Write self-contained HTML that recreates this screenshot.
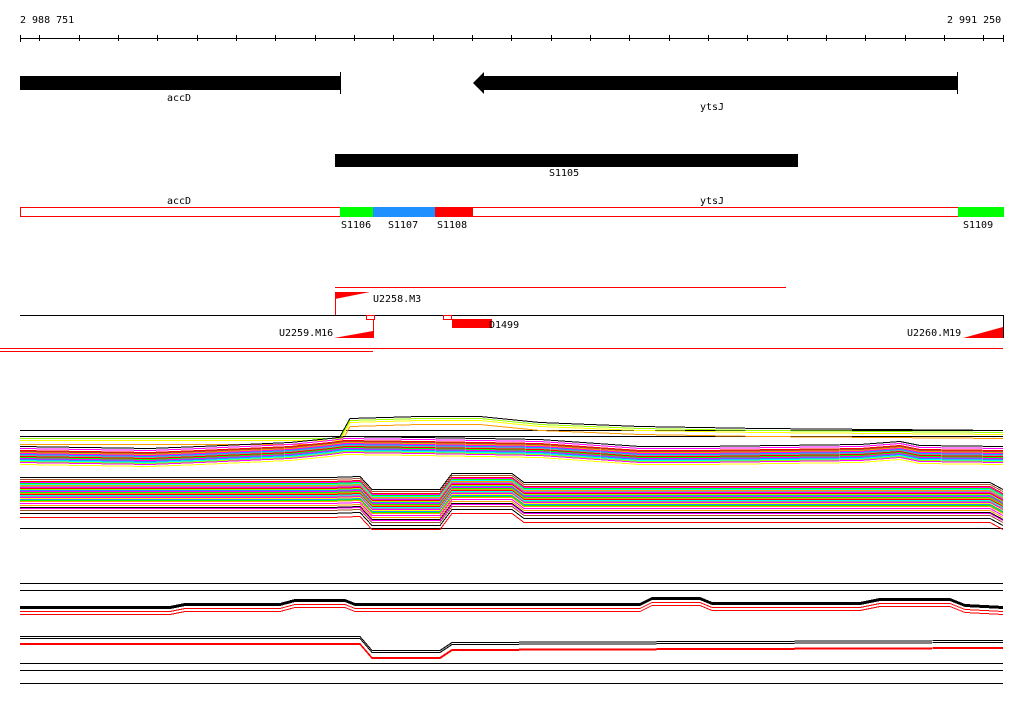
<!DOCTYPE html>
<html><head><style>
body{margin:0;background:#fff;}
svg{display:block;font-family:"DejaVu Sans Mono","Liberation Mono",monospace;font-size:10px;}
line,rect,polyline,polygon{shape-rendering:crispEdges;}
</style></head><body>
<svg width="1024" height="714" xmlns="http://www.w3.org/2000/svg">
<defs>
<polyline id="b1" fill="none" stroke-width="1" points="20,0 150,2 200,0 290,-4 330,-8 345,-10 420,-9 540,-7 640,0 700,0 860,-2 900,-5 920,-1 1003,0"/>
<polyline id="b1t" fill="none" stroke-width="1" points="20,0 340,0 350,-18 420,-20 480,-20 540,-14 640,-10 760,-8 1003,-6"/>
<polyline id="b2" fill="none" stroke-width="1" points="20,0 330,0 360,-1 372,12 440,12 452,-4 512,-4 524,5 700,5 990,5 1003,12"/>
<polyline id="c1" fill="none" stroke-width="1" points="20,0 170,0 185,-3 280,-3 295,-7 345,-7 355,-3 640,-3 652,-9 700,-9 712,-4 860,-4 880,-8 950,-8 965,-2 1003,0"/>
<polyline id="c2" fill="none" stroke-width="1" points="20,0 360,0 372,14 440,14 452,6 1003,4"/>
</defs>
<text x="20" y="23">2 988 751</text>
<text x="947" y="23">2 991 250</text>
<line x1="20" y1="38.5" x2="1003" y2="38.5" stroke="#000"/>
<g stroke="#000">
<line x1="20.5" y1="35" x2="20.5" y2="42"/><line x1="1003.5" y1="35" x2="1003.5" y2="42"/>
<line x1="39.5" y1="35" x2="39.5" y2="41"/><line x1="79.5" y1="35" x2="79.5" y2="41"/><line x1="118.5" y1="35" x2="118.5" y2="41"/><line x1="157.5" y1="35" x2="157.5" y2="41"/><line x1="197.5" y1="35" x2="197.5" y2="41"/><line x1="236.5" y1="35" x2="236.5" y2="41"/><line x1="275.5" y1="35" x2="275.5" y2="41"/><line x1="315.5" y1="35" x2="315.5" y2="41"/><line x1="354.5" y1="35" x2="354.5" y2="41"/><line x1="393.5" y1="35" x2="393.5" y2="41"/><line x1="433.5" y1="35" x2="433.5" y2="41"/><line x1="472.5" y1="35" x2="472.5" y2="41"/><line x1="511.5" y1="35" x2="511.5" y2="41"/><line x1="551.5" y1="35" x2="551.5" y2="41"/><line x1="590.5" y1="35" x2="590.5" y2="41"/><line x1="629.5" y1="35" x2="629.5" y2="41"/><line x1="669.5" y1="35" x2="669.5" y2="41"/><line x1="708.5" y1="35" x2="708.5" y2="41"/><line x1="747.5" y1="35" x2="747.5" y2="41"/><line x1="787.5" y1="35" x2="787.5" y2="41"/><line x1="826.5" y1="35" x2="826.5" y2="41"/><line x1="865.5" y1="35" x2="865.5" y2="41"/><line x1="905.5" y1="35" x2="905.5" y2="41"/><line x1="944.5" y1="35" x2="944.5" y2="41"/><line x1="983.5" y1="35" x2="983.5" y2="41"/>
</g>
<rect x="20" y="76" width="320" height="14" fill="#000"/>
<line x1="340.5" y1="72" x2="340.5" y2="94" stroke="#000"/>
<text x="167" y="101">accD</text>
<polygon points="473,83 484,72 484,76 958,76 958,90 484,90 484,94" fill="#000" style="shape-rendering:auto"/>
<line x1="957.5" y1="72" x2="957.5" y2="94" stroke="#000"/>
<text x="700" y="110">ytsJ</text>
<rect x="335" y="154" width="463" height="13" fill="#000"/>
<text x="549" y="176">S1105</text>
<text x="167" y="204">accD</text>
<text x="700" y="204">ytsJ</text>
<rect x="20.5" y="207.5" width="983" height="9" fill="none" stroke="#f00"/>
<rect x="340" y="207" width="33" height="10" fill="#0f0"/>
<rect x="373" y="207" width="62" height="10" fill="#1e90ff"/>
<rect x="435" y="207" width="38" height="10" fill="#f00"/>
<rect x="958" y="207" width="46" height="10" fill="#0f0"/>
<text x="341" y="228">S1106</text><text x="388" y="228">S1107</text><text x="437" y="228">S1108</text><text x="963" y="228">S1109</text>
<line x1="335" y1="287.5" x2="786" y2="287.5" stroke="#f00"/>
<polygon points="335,292 370,292 335,299" fill="#f00" style="shape-rendering:auto"/>
<line x1="335.5" y1="292" x2="335.5" y2="315" stroke="#f00"/>
<text x="373" y="302">U2258.M3</text>
<line x1="20" y1="315.5" x2="1003" y2="315.5" stroke="#000"/>
<rect x="366.5" y="315.5" width="8" height="4" fill="none" stroke="#f00"/>
<rect x="443.5" y="315.5" width="8" height="4" fill="none" stroke="#f00"/>
<rect x="452" y="319" width="40" height="9" fill="#f00"/>
<text x="489" y="328">D1499</text>
<polygon points="334,338 373,338 373,331" fill="#f00" style="shape-rendering:auto"/>
<line x1="373.5" y1="319" x2="373.5" y2="338" stroke="#f00"/>
<text x="279" y="336">U2259.M16</text>
<polygon points="963,338 1003,338 1003,327" fill="#f00" style="shape-rendering:auto"/>
<line x1="1003.5" y1="315" x2="1003.5" y2="338" stroke="#000"/>
<text x="907" y="336">U2260.M19</text>
<line x1="0" y1="348.5" x2="1003" y2="348.5" stroke="#f00"/>
<line x1="0" y1="351.5" x2="373" y2="351.5" stroke="#f00"/>
<g stroke="#000"><line x1="20" y1="430.5" x2="1003" y2="430.5"/><line x1="20" y1="436.5" x2="1003" y2="436.5"/><line x1="20" y1="528.5" x2="1003" y2="528.5"/></g>
<g transform="translate(0,0.5)">
<use href="#b1t" y="436" stroke="#000"/>
<use href="#b1t" y="438" stroke="#9f0"/>
<use href="#b1t" y="440" stroke="#ff0"/>
<use href="#b1t" y="444" stroke="#f90"/>
<use href="#b1" y="446" stroke="#000"/><use href="#b1" y="448" stroke="#f0f"/><use href="#b1" y="450" stroke="#f00"/><use href="#b1" y="451" stroke="#a0522d"/><use href="#b1" y="452" stroke="#f90"/><use href="#b1" y="453" stroke="#f0f"/><use href="#b1" y="454" stroke="#0af"/><use href="#b1" y="455" stroke="#999"/><use href="#b1" y="456" stroke="#f00"/><use href="#b1" y="457" stroke="#0f0"/><use href="#b1" y="458" stroke="#f0f"/><use href="#b1" y="459" stroke="#1e90ff"/><use href="#b1" y="460" stroke="#0ff"/><use href="#b1" y="461" stroke="#9f0"/><use href="#b1" y="462" stroke="#f0f"/><use href="#b1" y="464" stroke="#ff0"/>
<use href="#b2" y="477" stroke="#000"/><use href="#b2" y="479" stroke="#a0522d"/><use href="#b2" y="481" stroke="#f00"/><use href="#b2" y="482" stroke="#f0f"/><use href="#b2" y="483" stroke="#0f0"/><use href="#b2" y="484" stroke="#0ff"/><use href="#b2" y="485" stroke="#f90"/><use href="#b2" y="486" stroke="#999"/><use href="#b2" y="487" stroke="#f0f"/><use href="#b2" y="488" stroke="#f00"/><use href="#b2" y="489" stroke="#9f0"/><use href="#b2" y="490" stroke="#1e90ff"/><use href="#b2" y="491" stroke="#f0f"/><use href="#b2" y="492" stroke="#0f0"/><use href="#b2" y="493" stroke="#f90"/><use href="#b2" y="494" stroke="#f00"/><use href="#b2" y="495" stroke="#0ff"/><use href="#b2" y="496" stroke="#999"/><use href="#b2" y="497" stroke="#f0f"/><use href="#b2" y="498" stroke="#ff0"/><use href="#b2" y="499" stroke="#1e90ff"/><use href="#b2" y="500" stroke="#0f0"/><use href="#b2" y="501" stroke="#f90"/><use href="#b2" y="503" stroke="#f0f"/><use href="#b2" y="505" stroke="#f90"/><use href="#b2" y="507" stroke="#000"/><use href="#b2" y="508" stroke="#f0f"/><use href="#b2" y="510" stroke="#a0522d"/><use href="#b2" y="513" stroke="#000"/><use href="#b2" y="517" stroke="#f00"/>
<use href="#c1" y="606" stroke="#000"/>
<use href="#c1" y="607" stroke="#000"/>
<use href="#c1" y="608" stroke="#000"/>
<use href="#c1" y="611" stroke="#f00"/>
<use href="#c1" y="614" stroke="#f00"/>
<use href="#c2" y="636" stroke="#000"/>
<use href="#c2" y="638" stroke="#000"/>
<use href="#c2" y="643" stroke="#f00"/>
<use href="#c2" y="644" stroke="#f00"/>
</g>
<g stroke="#000"><line x1="20" y1="583.5" x2="1003" y2="583.5"/><line x1="20" y1="590.5" x2="1003" y2="590.5"/><line x1="20" y1="663.5" x2="1003" y2="663.5"/><line x1="20" y1="670.5" x2="1003" y2="670.5"/><line x1="20" y1="683.5" x2="1003" y2="683.5"/></g>
</svg>
</body></html>
